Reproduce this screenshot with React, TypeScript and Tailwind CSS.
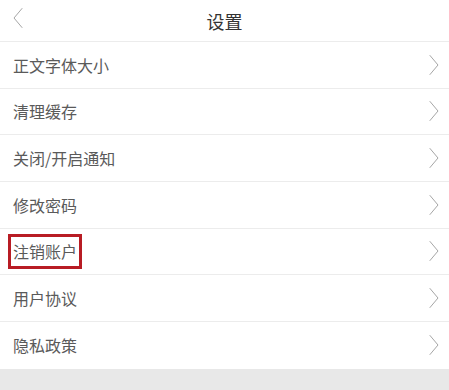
const items = ["正文字体大小", "清理缓存", "关闭/开启通知", "修改密码", "注销账户", "用户协议", "隐私政策"];

const Chevron = ({ dir }: { dir: "left" | "right" }) => (
  <svg width="12" height="22" viewBox="0 0 12 22" fill="none">
    <path
      d={dir === "left" ? "M10 1.5 L2 11 L10 20.5" : "M2 1.5 L10 11 L2 20.5"}
      stroke="#a6a6a6"
      strokeWidth="1"
      strokeLinecap="round"
      strokeLinejoin="round"
    />
  </svg>
);

export default function App() {
  return (
    <div
      className="w-[449px] h-[390px] bg-[#e8e8e8] flex flex-col"
      style={{ fontFamily: '"Noto Sans CJK SC", "Noto Sans", sans-serif' }}
    >
      <div className="h-[42px] bg-white border-b border-[#ececec] flex items-center relative">
        <div className="absolute left-[12px] top-[7px]">
          <Chevron dir="left" />
        </div>
        <div className="flex-1 text-center text-[18px] text-[#333] leading-none">设置</div>
      </div>
      <div className="bg-white">
        {items.map((t, i) => (
          <div
            key={t}
            className={`h-[46.67px] flex items-center justify-between pl-[13px] pr-[9px] ${
              i < items.length - 1 ? "border-b border-[#ececec]" : ""
            }`}
          >
            {t === "注销账户" ? (
              <span className="-ml-[5px] border-[3px] border-[#b81c24] px-[2px] py-[4px] text-[16px] leading-[21px] text-[#5a5a5a]">
                {t}
              </span>
            ) : (
              <span className="text-[16px] text-[#5a5a5a]">{t}</span>
            )}
            <Chevron dir="right" />
          </div>
        ))}
      </div>
    </div>
  );
}
